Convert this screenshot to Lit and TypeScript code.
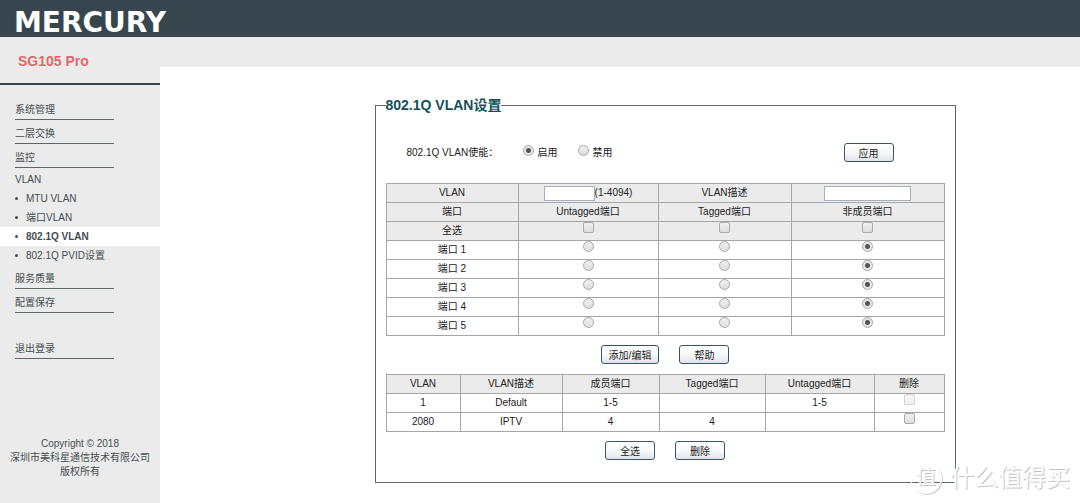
import { LitElement, html, css } from "lit";
import { customElement, state } from "lit/decorators.js";
import { classMap } from "lit/directives/class-map.js";

interface VlanRow {
  id: string;
  name: string;
  members: string;
  tagged: string;
  untagged: string;
  locked: boolean;
}

const controls = css`
  button {
    box-sizing: border-box;
    height: 19px;
    min-width: 50px;
    margin: 0;
    padding: 2px 7px 0;
    border: 1px solid #3c5468;
    border-radius: 3px;
    background: linear-gradient(#ffffff, #f6f8f9 55%, #dde3e8);
    color: #222;
    font: inherit;
    line-height: 15px;
    white-space: nowrap;
  }
  input {
    box-sizing: border-box;
    margin: 0;
    font: inherit;
  }
  input[type="text"] {
    height: 15px;
    padding: 0 2px;
    border: 1px solid #a3b1bf;
    background: #fff;
  }
  input[type="radio"],
  input[type="checkbox"] {
    appearance: none;
    flex: none;
    width: 11px;
    height: 11px;
    border: 1px solid #a9a9a9;
    border-radius: 2px;
    background: linear-gradient(#f0f0f0, #dedede);
  }
  input[type="radio"] {
    border-radius: 50%;
  }
  input[type="radio"]:checked {
    background: radial-gradient(circle, #555 0 2px, #e6e6e6 3px);
  }
  input[type="checkbox"]:checked {
    background: #666;
  }
  input:disabled {
    border-color: #d4d4d4;
    background: #f3f3f3;
  }
`;

@customElement("side-menu")
export class SideMenu extends LitElement {
  static styles = css`
    :host {
      display: flex;
      flex-direction: column;
      background: #ebebeb;
      color: #454d51;
    }
    .model {
      margin: 0;
      padding: 14px 18px 12px;
      border-bottom: 2px solid #37444c;
      color: #e4676a;
      font-size: 14px;
      line-height: 20px;
    }
    ul {
      margin: 0;
      padding: 0;
      list-style: none;
    }
    .menu {
      padding-top: 11px;
    }
    a {
      display: block;
      color: inherit;
      text-decoration: none;
    }
    .item {
      margin: 0 46px 0 15px;
      padding-top: 5px;
      border-bottom: 1px solid #5b6669;
      line-height: 18px;
    }
    .open {
      padding: 2px 0 0 15px;
      line-height: 19px;
    }
    .sub {
      display: flex;
      align-items: center;
      gap: 8px;
      padding-left: 15px;
      line-height: 19px;
    }
    .sub::before {
      content: "";
      width: 3px;
      height: 3px;
      border-radius: 50%;
      background: #454d51;
    }
    .active {
      background: #fff;
      font-weight: bold;
    }
    .exit {
      margin-top: 22px;
    }
    footer {
      margin-top: auto;
      padding: 20px 4px 24px;
      text-align: center;
      line-height: 14px;
    }
  `;

  render() {
    const subs = ["MTU VLAN", "端口VLAN", "802.1Q VLAN", "802.1Q PVID设置"];
    const item = (t: string) => html`<li><a class="item" href="#">${t}</a></li>`;
    return html`
      <h1 class="model">SG105 Pro</h1>
      <nav>
        <ul class="menu">
          ${["系统管理", "二层交换", "监控"].map(item)}
          <li>
            <a class="open" href="#">VLAN</a>
            <ul>
              ${subs.map(
                (t) => html`<li>
                  <a class=${classMap({ sub: true, active: t === "802.1Q VLAN" })} href="#">${t}</a>
                </li>`
              )}
            </ul>
          </li>
          ${["服务质量", "配置保存"].map(item)}
          <li class="exit"><a class="item" href="#">退出登录</a></li>
        </ul>
      </nav>
      <footer>Copyright © 2018<br />深圳市美科星通信技术有限公司<br />版权所有</footer>
    `;
  }
}

@customElement("vlan-settings")
export class VlanSettings extends LitElement {
  @state() private rows: VlanRow[] = [
    { id: "1", name: "Default", members: "1-5", tagged: "", untagged: "1-5", locked: true },
    { id: "2080", name: "IPTV", members: "4", tagged: "4", untagged: "", locked: false },
  ];

  static styles = [
    controls,
    css`
      :host {
        display: block;
        color: #222;
      }
      fieldset {
        min-width: 0;
        margin: 0;
        padding: 0 10px 22px;
        border: 1px solid #5f676a;
      }
      legend {
        padding: 0;
        color: #14505a;
        font-size: 14px;
        font-weight: bold;
        line-height: 16px;
      }
      .enable {
        display: flex;
        align-items: center;
        margin: 30px 51px 21px 21px;
      }
      .caption {
        width: 116px;
      }
      .choice {
        display: flex;
        align-items: center;
        gap: 4px;
        margin-right: 20px;
      }
      .choice input {
        margin-bottom: 4px;
      }
      .apply {
        margin-left: auto;
      }
      table {
        width: 100%;
        table-layout: fixed;
        border-collapse: collapse;
        text-align: center;
      }
      th,
      td {
        box-sizing: border-box;
        height: 19px;
        padding: 0;
        border: 1px solid #a3a7a8;
        font-weight: normal;
        line-height: 16px;
      }
      .shade {
        background: #ebebeb;
      }
      .field {
        display: flex;
        align-items: center;
        justify-content: center;
      }
      .mark {
        display: flex;
        justify-content: center;
        padding-bottom: 7px;
      }
      .w-port { width: 132px; }
      .w-untagged { width: 140px; }
      .w-tagged { width: 133px; }
      .w-id { width: 74px; }
      .w-name { width: 102px; }
      .w-member { width: 97px; }
      .w-tag { width: 106px; }
      .w-untag { width: 109px; }
      .vid { width: 51px; }
      .desc { width: 87px; }
      .actions {
        display: flex;
        justify-content: center;
        gap: 20px;
        margin: 9px 0 10px;
      }
      .last {
        margin-bottom: 0;
      }
    `,
  ];

  render() {
    const groups = ["Untagged端口", "Tagged端口", "非成员端口"];
    return html`
      <fieldset>
        <legend>802.1Q VLAN设置</legend>
        <div class="enable" role="radiogroup" aria-labelledby="enable">
          <span class="caption" id="enable">802.1Q VLAN使能：</span>
          <label class="choice"><input type="radio" name="enable" checked />启用</label>
          <label class="choice"><input type="radio" name="enable" />禁用</label>
          <button class="apply">应用</button>
        </div>
        <table>
          <colgroup>
            <col class="w-port" /><col class="w-untagged" /><col class="w-tagged" /><col />
          </colgroup>
          <thead class="shade">
            <tr>
              <th><label for="vid">VLAN</label></th>
              <td><div class="field"><input class="vid" id="vid" type="text" />(1-4094)</div></td>
              <th><label for="desc">VLAN描述</label></th>
              <td><div class="field"><input class="desc" id="desc" type="text" /></div></td>
            </tr>
            <tr>
              <th>端口</th>
              ${groups.map((g) => html`<th>${g}</th>`)}
            </tr>
            <tr>
              <th>全选</th>
              ${groups.map(
                (g) => html`<td><div class="mark"><input type="checkbox" aria-label="全选 ${g}" /></div></td>`
              )}
            </tr>
          </thead>
          <tbody>
            ${[1, 2, 3, 4, 5].map(
              (n) => html`<tr>
                <th>端口 ${n}</th>
                ${groups.map(
                  (g, i) => html`<td>
                    <div class="mark">
                      <input type="radio" name="port${n}" aria-label="端口 ${n} ${g}" ?checked=${i === 2} />
                    </div>
                  </td>`
                )}
              </tr>`
            )}
          </tbody>
        </table>
        <div class="actions"><button>添加/编辑</button><button>帮助</button></div>
        <table>
          <colgroup>
            <col class="w-id" /><col class="w-name" /><col class="w-member" />
            <col class="w-tag" /><col class="w-untag" /><col />
          </colgroup>
          <thead class="shade">
            <tr>
              ${["VLAN", "VLAN描述", "成员端口", "Tagged端口", "Untagged端口", "删除"].map(
                (h) => html`<th>${h}</th>`
              )}
            </tr>
          </thead>
          <tbody>
            ${this.rows.map(
              (r) => html`<tr>
                <td>${r.id}</td>
                <td>${r.name}</td>
                <td>${r.members}</td>
                <td>${r.tagged}</td>
                <td>${r.untagged}</td>
                <td>
                  <div class="mark">
                    <input type="checkbox" aria-label="删除 VLAN ${r.id}" ?disabled=${r.locked} />
                  </div>
                </td>
              </tr>`
            )}
          </tbody>
        </table>
        <div class="actions last"><button>全选</button><button>删除</button></div>
      </fieldset>
    `;
  }
}

@customElement("app-root")
export class AppRoot extends LitElement {
  static styles = css`
    :host {
      display: flex;
      flex-direction: column;
      position: relative;
      min-height: 100vh;
      background: #fff;
      font-family: "Liberation Sans", "Noto Sans CJK SC", sans-serif;
      font-size: 10px;
      line-height: 16px;
    }
    .top {
      display: flex;
      align-items: center;
      height: 37px;
      padding: 8px 14px 0;
      box-sizing: border-box;
      background: #37464e;
    }
    .logo {
      color: #fff;
      font-family: "DejaVu Sans", sans-serif;
      font-size: 28px;
      font-weight: bold;
      line-height: 30px;
    }
    .body {
      display: grid;
      grid-template-columns: 160px minmax(0, 1fr);
      flex: 1;
    }
    main {
      border-top: 30px solid #ebebeb;
      padding: 30px 0 20px 90px;
    }
    .panel {
      max-width: 581px;
      margin: 0 auto;
    }
    .watermark {
      position: absolute;
      right: 10px;
      bottom: 9px;
      display: flex;
      align-items: center;
      gap: 8px;
      color: #fff;
      font-size: 24px;
      line-height: 32px;
      text-shadow: 1px 1px 0 #c4c4c4;
      pointer-events: none;
    }
    .badge {
      box-sizing: border-box;
      width: 32px;
      height: 32px;
      border: 1px solid #fff;
      border-radius: 50%;
      box-shadow: 1px 1px 0 #ccc;
      font-size: 20px;
      line-height: 28px;
      text-align: center;
    }
  `;

  render() {
    return html`
      <header class="top"><span class="logo">MERCURY</span></header>
      <div class="body">
        <side-menu></side-menu>
        <main><vlan-settings class="panel"></vlan-settings></main>
      </div>
      <div class="watermark"><span class="badge">值</span><span>什么值得买</span></div>
    `;
  }
}
